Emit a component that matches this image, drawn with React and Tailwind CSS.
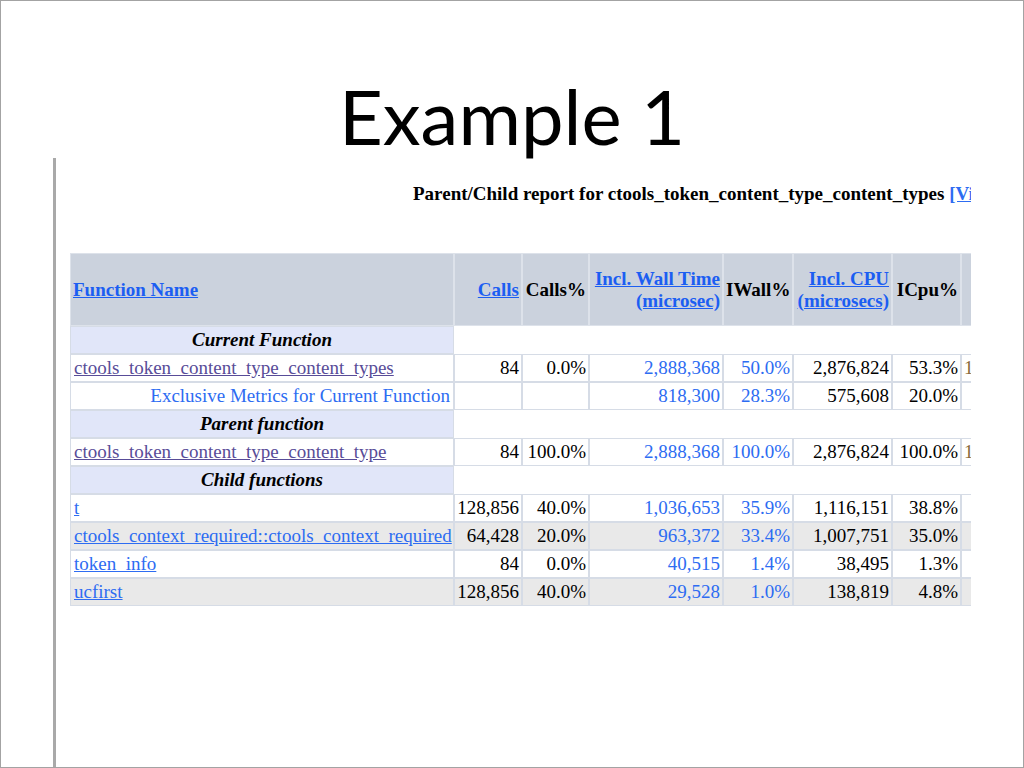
const serif = { fontFamily: '"Liberation Serif", "Times New Roman", serif' }

const rows = [
    { type: 'section', label: 'Current Function' },
    { name: 'ctools_token_content_type_content_types', visited: true, cells: ['84', '0.0%', '2,888,368', '50.0%', '2,876,824', '53.3%', '1'] },
    { name: 'Exclusive Metrics for Current Function', exclusive: true, cells: ['', '', '818,300', '28.3%', '575,608', '20.0%', ''] },
    { type: 'section', label: 'Parent function' },
    { name: 'ctools_token_content_type_content_type', visited: true, cells: ['84', '100.0%', '2,888,368', '100.0%', '2,876,824', '100.0%', '1'] },
    { type: 'section', label: 'Child functions' },
    { name: 't', cells: ['128,856', '40.0%', '1,036,653', '35.9%', '1,116,151', '38.8%', ''] },
    { name: 'ctools_context_required::ctools_context_required', gray: true, cells: ['64,428', '20.0%', '963,372', '33.4%', '1,007,751', '35.0%', ''] },
    { name: 'token_info', cells: ['84', '0.0%', '40,515', '1.4%', '38,495', '1.3%', ''] },
    { name: 'ucfirst', gray: true, cells: ['128,856', '40.0%', '29,528', '1.0%', '138,819', '4.8%', ''] },
]

// wall time columns are blue in the report, last column is cut off
const cellColor = ['text-black', 'text-black', 'text-[#2d6cf2]', 'text-[#2d6cf2]', 'text-black', 'text-black', 'text-[#8a6a3a]']

function HeadCell({ children, left }) {
    return (
        <td className={'h-[73px] border border-[#dde2ea] bg-[#cbd2dd] px-[2px] align-middle font-bold leading-[22px] ' + (left ? 'text-left' : 'text-right')}>
            {children}
        </td>
    )
}

function DataRow({ row }) {
    if (row.type === 'section') {
        return (
            <tr>
                <td className="h-[28px] border border-[#d6dce6] bg-[#e1e6f9] text-center font-bold italic leading-[22px]">
                    {row.label}
                </td>
            </tr>
        )
    }
    const bg = row.gray ? 'bg-[#e9e9e9]' : 'bg-white'
    return (
        <tr>
            <td className={'h-[28px] border border-[#d6dce6] px-[3px] leading-[22px] whitespace-nowrap ' + bg + (row.exclusive ? ' text-right' : ' text-left')}>
                {row.exclusive ? (
                    <span className="text-[#2d6cf2]">{row.name}</span>
                ) : (
                    <a className={'underline ' + (row.visited ? 'text-[#584c98]' : 'text-[#2d6cf2]')}>{row.name}</a>
                )}
            </td>
            {row.cells.map((c, i) => (
                <td key={i} className={'h-[28px] border border-[#d6dce6] px-[2px] leading-[22px] whitespace-nowrap ' + bg + ' ' + cellColor[i] + (i === 6 ? ' text-left' : ' text-right')}>
                    {c}
                </td>
            ))}
        </tr>
    )
}

export default function App() {
    return (
        <div className="w-[1024px] h-[768px] border border-[#a3a3a3] bg-white flex flex-col overflow-hidden">
            <div className="h-[157px] pt-[77px] text-center">
                <h1 className="text-[76px] leading-none text-black" style={{ fontFamily: 'Lato, "Open Sans", sans-serif' }}>
                    Example 1
                </h1>
            </div>

            <div className="flex-1 ml-[52px] w-[918px] border-l-[3px] border-[#a9a9a9] overflow-hidden" style={serif}>
                <div className="mt-[25px] pl-[357px] text-[19px] leading-[22px] font-bold text-black whitespace-nowrap">
                    Parent/Child report for ctools_token_content_type_content_types{' '}
                    <a className="text-[#2d6cf2] underline">[View Full Data]</a>
                </div>

                <table className="mt-[48px] ml-[14px] w-[991px] table-fixed border-separate border-spacing-0 text-[19px] text-black">
                    <colgroup>
                        <col className="w-[384px]" />
                        <col className="w-[68px]" />
                        <col className="w-[67px]" />
                        <col className="w-[134px]" />
                        <col className="w-[70px]" />
                        <col className="w-[99px]" />
                        <col className="w-[69px]" />
                        <col className="w-[100px]" />
                    </colgroup>
                    <tbody>
                        <tr>
                            <HeadCell left>
                                <a className="text-[#1c5ef2] underline">Function Name</a>
                            </HeadCell>
                            <HeadCell><a className="text-[#1c5ef2] underline">Calls</a></HeadCell>
                            <HeadCell>Calls%</HeadCell>
                            <HeadCell>
                                <a className="text-[#1c5ef2] underline">Incl. Wall Time<br />(microsec)</a>
                            </HeadCell>
                            <HeadCell>IWall%</HeadCell>
                            <HeadCell>
                                <a className="text-[#1c5ef2] underline">Incl. CPU<br />(microsecs)</a>
                            </HeadCell>
                            <HeadCell>ICpu%</HeadCell>
                            <HeadCell>Excl.</HeadCell>
                        </tr>
                        {rows.map((r, i) => (
                            <DataRow key={i} row={r} />
                        ))}
                    </tbody>
                </table>
            </div>
        </div>
    )
}
